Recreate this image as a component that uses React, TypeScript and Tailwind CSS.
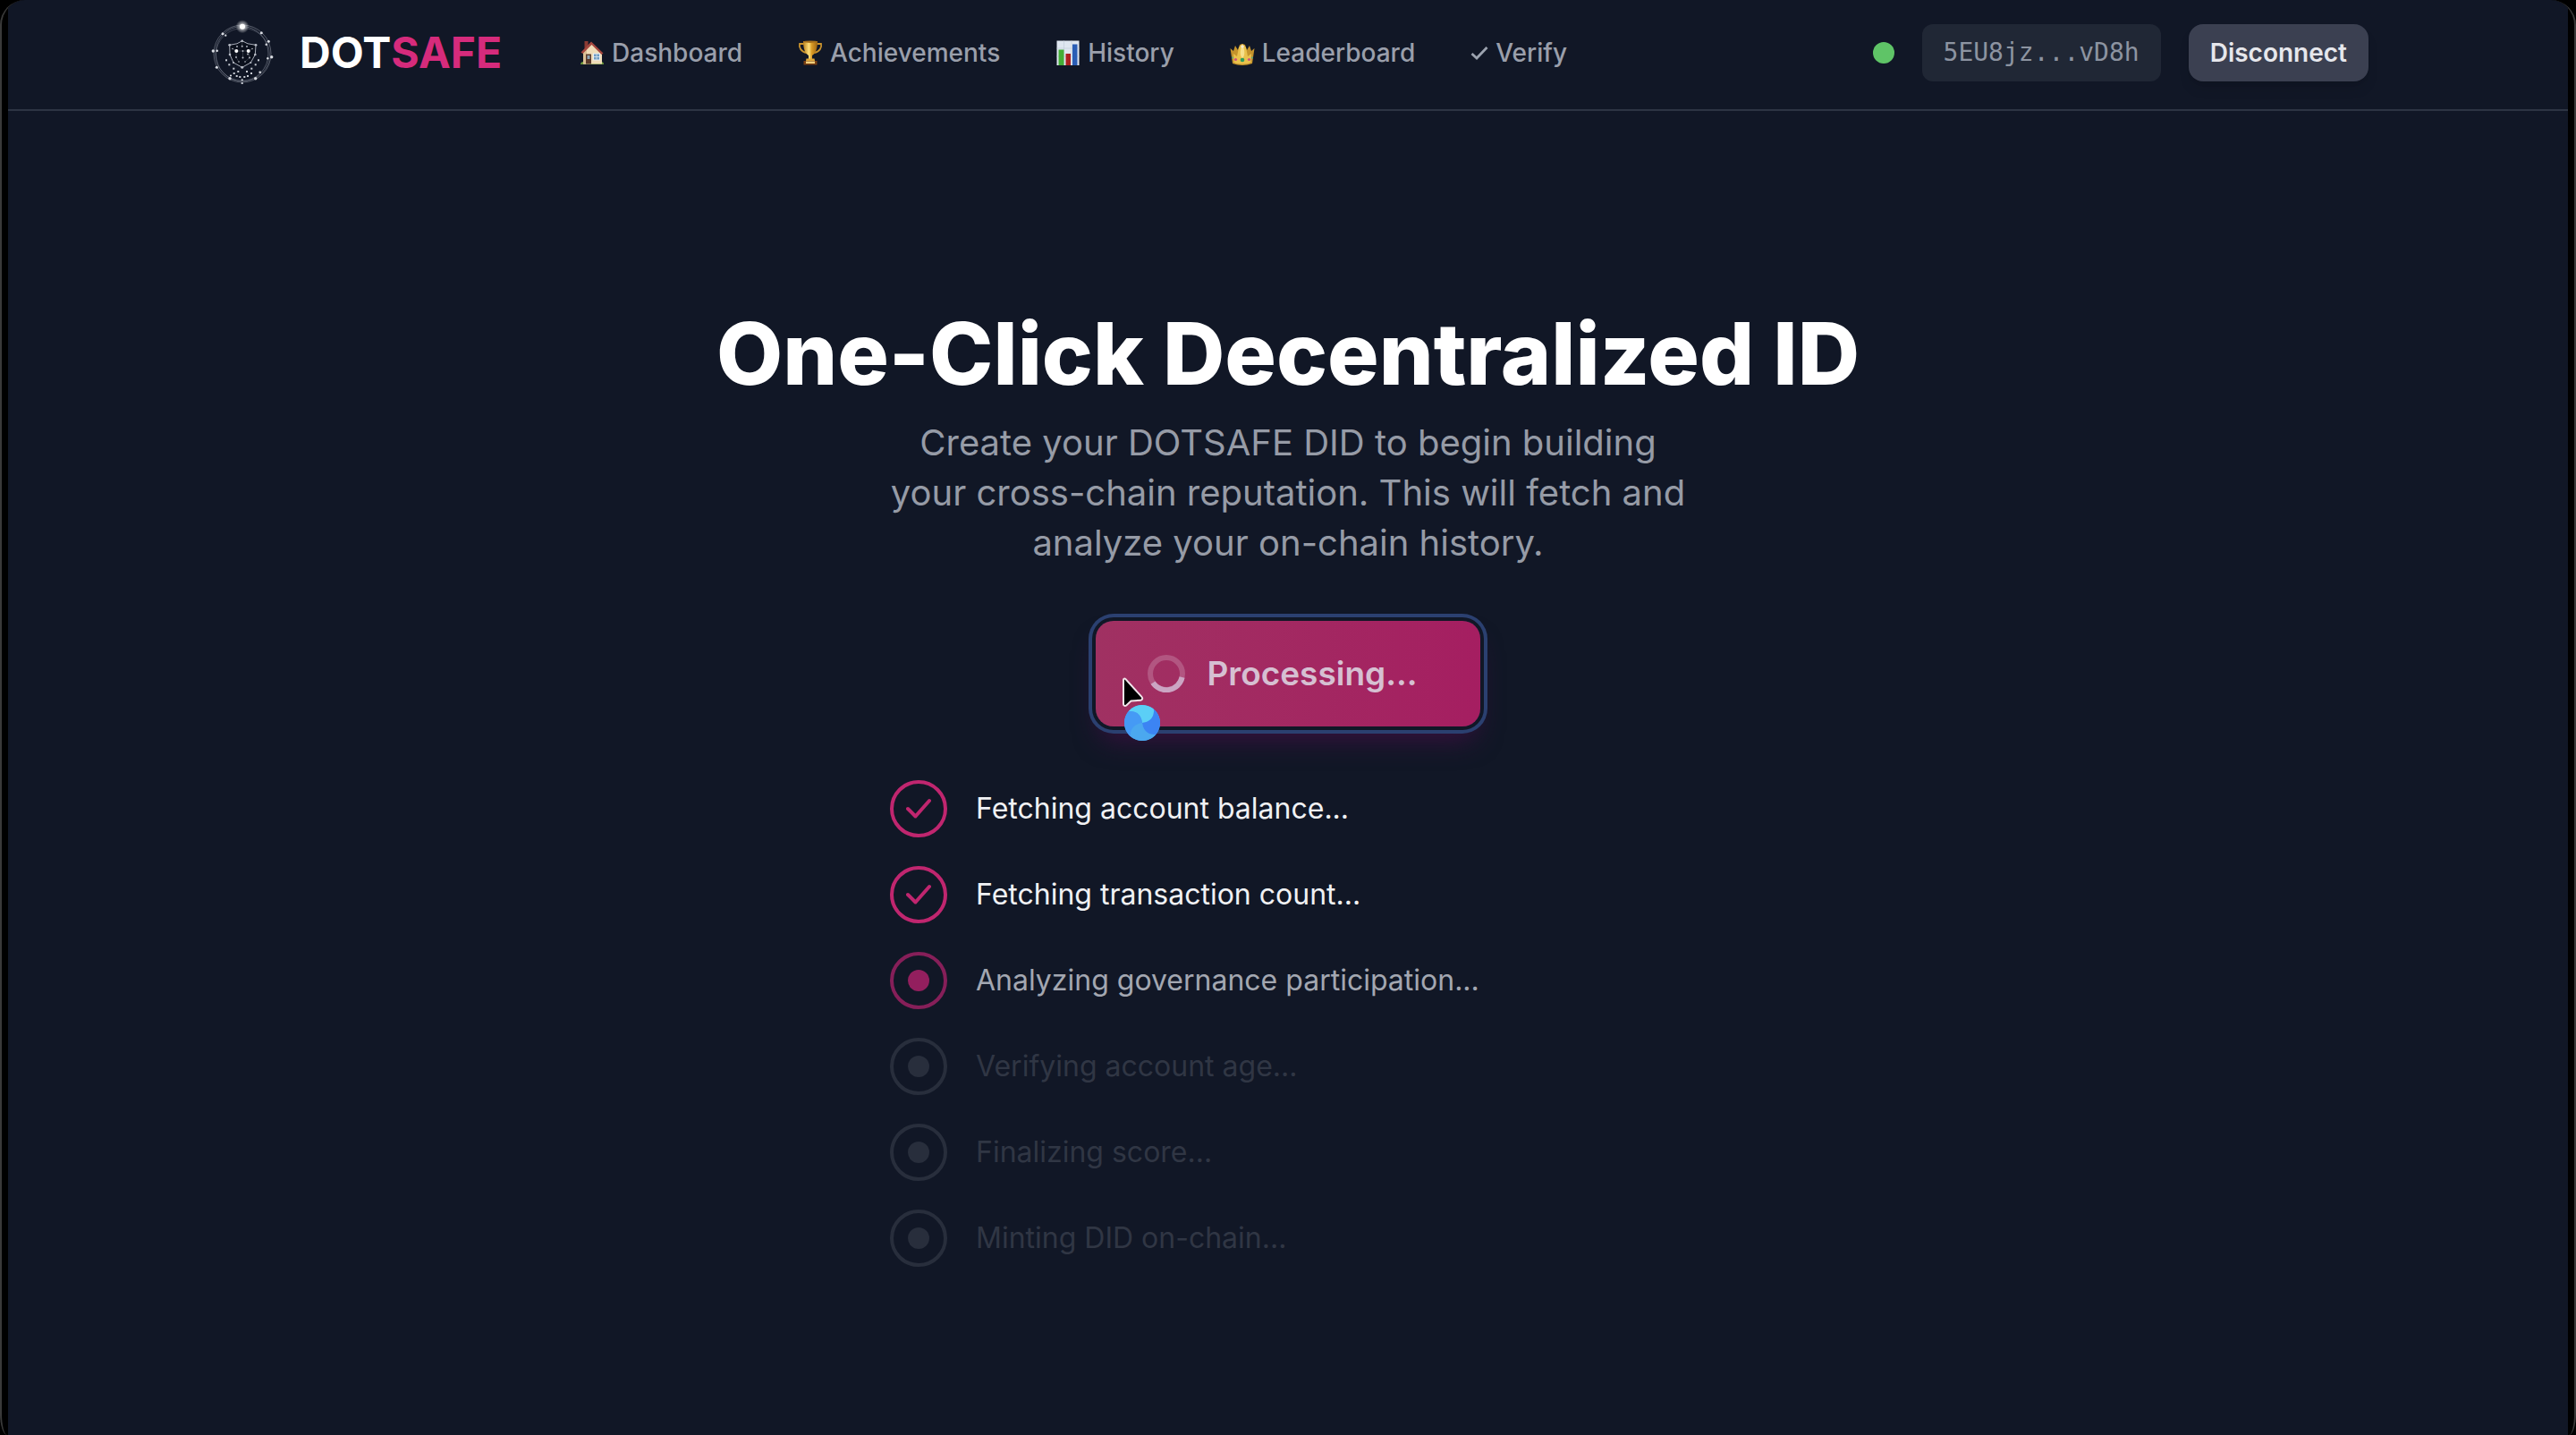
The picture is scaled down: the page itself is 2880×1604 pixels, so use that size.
import React from "react";

const ringNodes: [number, number, number][] = [
  [17, 18.7, 1.5], [20.3, 20.7, 1.1], [60.3, 17.7, 1.5], [68.3, 27.3, 1.5], [65.7, 30.7, 1.2],
  [71.7, 44.7, 1.7], [67.3, 46.3, 1.2], [58.7, 61.7, 1.3], [53.7, 68.7, 1.7], [25, 68.7, 1.7],
  [26, 65.5, 1.1], [10.3, 56.3, 1.5], [6.3, 38, 1.7], [10.7, 37.7, 1.3],
];

const shieldNodes: [number, number, number][] = [
  [38.7, 26.7, 1.3], [24.7, 31.3, 1.4], [54, 31.3, 1.4], [25, 42, 1.3], [53.3, 42, 1.3],
  [29, 51, 1.1], [48.3, 51, 1.1], [38.7, 56.3, 1.5], [33, 33, 0.9], [38.7, 32.8, 1], [44, 33, 0.9],
  [28, 35.5, 0.8], [50, 35.5, 0.8], [39.5, 38, 0.9], [32, 45, 0.9], [39.5, 45.5, 1], [45, 41.5, 0.9],
  [47, 45.5, 0.9], [35, 50, 0.8], [42, 50, 0.8],
];

const particles: [number, number][] = [
  [21, 48.3], [57, 48.3], [24.3, 53.3], [53.7, 53.3], [29.3, 57.7], [49.3, 57.7], [34.3, 61],
  [44, 61], [29.7, 63], [49, 63], [32.7, 66], [45, 66], [36.3, 67], [41.3, 67], [38.7, 70.3], [38.7, 74],
];

function Logo() {
  return (
    <svg viewBox="0 0 80 80" className="size-20 shrink-0" fill="none" aria-hidden="true">
      <defs>
        <radialGradient id="glow">
          <stop offset="0" stopColor="#fff" />
          <stop offset="0.4" stopColor="#fff" stopOpacity="0.6" />
          <stop offset="1" stopColor="#fff" stopOpacity="0" />
        </radialGradient>
      </defs>
      <circle cx="39" cy="41" r="32" stroke="#8f96a3" strokeOpacity="0.55" />
      <ellipse cx="38.5" cy="41" rx="29.5" ry="30.5" stroke="#8f96a3" strokeOpacity="0.5" />
      <ellipse cx="39.5" cy="42" rx="30" ry="29.5" stroke="#8f96a3" strokeOpacity="0.35" />
      <circle cx="39" cy="10.7" r="7.5" fill="url(#glow)" />
      <circle cx="39" cy="10.7" r="3" fill="#fff" />
      {ringNodes.map(([x, y, r]) => (
        <circle key={`${x}-${y}`} cx={x} cy={y} r={r} fill="#d9dce2" />
      ))}
      <path
        d="M38.7 26.7 33 29.8 24.7 31.3 25 42 29 51 38.7 56.3 48.3 51 53.3 42 54 31.3 45 29.8Z"
        fill="#0b101c"
        stroke="#a6abb6"
      />
      <path
        d="M28 35.5 32.3 38 39.5 38 45.7 38 50 35.5M39.5 38v7.5M32.3 38 32 45l3 5M45.7 38 47 45.5 42 50M38.7 26.7v6"
        stroke="#a6abb6"
        strokeOpacity="0.35"
        strokeWidth="0.7"
      />
      {shieldNodes.map(([x, y, r]) => (
        <circle key={`${x}-${y}`} cx={x} cy={y} r={r} fill="#b9bdc7" />
      ))}
      <circle cx="32.3" cy="38" r="2" fill="#fff" />
      <circle cx="45.7" cy="38" r="2" fill="#fff" />
      {particles.map(([x, y]) => (
        <rect key={`${x}-${y}`} x={x - 1} y={y - 1} width="2" height="2" fill="#c9cdd5" />
      ))}
    </svg>
  );
}

function HouseIcon() {
  return (
    <svg viewBox="0 0 28 28" className="size-7" aria-hidden="true">
      <path d="M1 27c0-2 1.500-3 3-3h20c2 0 3 1 3 3z" fill="#6f9a3c" />
      <path d="M4 13 13.500 3 25 14v12.500H4z" fill="#f0dcb8" />
      <path d="M4 13 8 9v17.500H4z" fill="#dcc095" />
      <path d="M5.500 1h4v5l-4 4z" fill="#8c3a33" />
      <path d="M13 1.500 1.500 13.500l2 1.500L13.500 5l11 11 2-1.500z" fill="#a5473f" />
      <rect x="7" y="15.500" width="6" height="11" fill="#5b3a2b" />
      <rect x="8.500" y="17" width="3" height="4" fill="#8fa5b5" />
      <rect x="15" y="14.500" width="8" height="8" fill="#e9eef2" />
      <rect x="16" y="15.500" width="6" height="6" fill="#6e9cc4" />
      <path d="M19 15.500v6M16 18.500h6" stroke="#dbe5ee" strokeWidth="0.800" />
    </svg>
  );
}

function TrophyIcon() {
  return (
    <svg viewBox="0 0 28 28" className="size-7" aria-hidden="true">
      <defs>
        <linearGradient id="cup">
          <stop offset="0" stopColor="#b9801d" />
          <stop offset="0.4" stopColor="#ffe07a" />
          <stop offset="0.6" stopColor="#d99a25" />
          <stop offset="1" stopColor="#9c6414" />
        </linearGradient>
      </defs>
      <path
        d="M7 4H2c-1 4 1.500 9 8 10M21 4h5c1 4-1.500 9-8 10"
        fill="none"
        stroke="#c8922e"
        strokeWidth="1.800"
      />
      <path d="M6 1h16c0 8-2 14-6 16v4h-4v-4C8 15 6 9 6 1z" fill="url(#cup)" />
      <ellipse cx="14" cy="1.700" rx="8" ry="1.200" fill="#a8701b" />
      <path d="M9.500 20.500h9l.5 2.500H9z" fill="#e0a83a" />
      <path d="M6.500 23h15v4.500h-15z" fill="#7a3f12" />
      <rect x="9" y="23.500" width="10" height="2.500" fill="#f0cf7d" />
    </svg>
  );
}

function ChartIcon() {
  return (
    <svg viewBox="0 0 28 28" className="size-7" aria-hidden="true">
      <rect x="1.500" y="0.500" width="25" height="27.500" fill="#dfe6f0" />
      <path d="M1.500 9h25M1.500 18h25M9.500 .5V28M18 .5V28" stroke="#c3cddb" strokeWidth="0.700" />
      <rect x="3.500" y="10.500" width="6" height="17.500" fill="#44ad35" />
      <rect x="11.500" y="15" width="5.500" height="13" fill="#ad2020" />
      <rect x="19" y="4.500" width="5.500" height="23.500" fill="#2a5db5" />
    </svg>
  );
}

function CrownIcon() {
  return (
    <svg viewBox="0 0 28 28" className="size-7" aria-hidden="true">
      <path d="M3 26 .5 9 4 12 6 6l3 5 2-6 3-1 3 1 2 6 3-5 2 6 3.500-3L25 26c-7 2.500-15 2.500-22 0z" fill="#c4932c" />
      <path d="M4.500 25 4 15l4 3 2-10 4-4 4 4 2 10 4-3-.5 10c-6 2-13 2-19 0z" fill="#e9c14c" />
      <path d="M14 6c3 4 3 12 0 14-3-2-3-10 0-14z" fill="#f7e08c" />
      <circle cx="14" cy="7" r="1.800" fill="#f4ead0" />
      <circle cx="14" cy="22" r="2.300" fill="#2f9d5b" />
      <circle cx="6.500" cy="21.500" r="1.600" fill="#d0527c" />
      <circle cx="21.500" cy="21.500" r="1.600" fill="#d0527c" />
      <circle cx="3" cy="19.500" r="1" fill="#4aa58a" />
      <circle cx="25" cy="19.500" r="1" fill="#4aa58a" />
    </svg>
  );
}

function VerifyIcon() {
  return (
    <svg viewBox="0 0 20 28" className="h-7 w-5" fill="none" aria-hidden="true">
      <path d="M1.500 15 7 20 18.500 8" stroke="#9ca3af" strokeWidth="2.800" />
    </svg>
  );
}

const links = [
  { label: "Dashboard", icon: <HouseIcon /> },
  { label: "Achievements", icon: <TrophyIcon /> },
  { label: "History", icon: <ChartIcon /> },
  { label: "Leaderboard", icon: <CrownIcon /> },
  { label: "Verify", icon: <VerifyIcon /> },
];

function Header() {
  return (
    <header className="border-b-2 border-[#2d3443] px-8 pt-[19px] pb-[23px]">
      <div className="mx-auto flex h-20 max-w-[2416px] items-center">
        <a href="#home" className="flex items-center gap-[23px]">
          <Logo />
          <span className="text-5xl leading-none font-bold text-white">
            DOT<span className="text-[#d62b7c]">SAFE</span>
          </span>
        </a>
        <nav className="ml-[87px] flex items-center gap-[62px] text-[28px] leading-10 font-medium text-[#9a9fab]">
          {links.map((link) => (
            <a key={link.label} href={`#${link.label.toLowerCase()}`} className="flex items-center gap-2">
              {link.icon}
              {link.label}
            </a>
          ))}
        </nav>
        <div className="ml-auto flex items-center gap-[31px]">
          <span className="size-6 rounded-full bg-[#5fc467]" />
          <span className="rounded-xl bg-[#202735] px-6 py-3 font-['DejaVu_Sans_Mono',monospace] text-[28px] leading-10 text-[#8d94a1]">
            5EU8jz...vD8h
          </span>
          <button
            type="button"
            className="rounded-2xl bg-[#3b4051] px-6 py-3 text-[28px] leading-10 font-semibold text-[#e6e7ec] shadow-lg"
          >
            Disconnect
          </button>
        </div>
      </div>
    </header>
  );
}

const blades = [
  { angle: 0, color: "#5bcff6" },
  { angle: 90, color: "#3c84f3" },
  { angle: 180, color: "#4ba8ef" },
  { angle: 270, color: "#459af5" },
];

function Pointer() {
  return (
    <svg
      viewBox="0 0 76 80"
      className="pointer-events-none absolute top-[60px] left-7 h-20 w-[76px]"
      aria-hidden="true"
    >
      <path
        d="M3 6v27c0 2 2 2.500 3.500 1.200l5-4.700 10.500-.8c2.500-.2 2.800-2.200 1.200-4L5.500 5.200C4.300 4 3 4.500 3 6z"
        fill="#000"
        stroke="#f1e4ea"
        strokeWidth="2"
        strokeLinejoin="round"
      />
      <g transform="translate(24 54)">
        <circle r="20" fill="#48a2f3" />
        {blades.map((blade) => (
          <path
            key={blade.angle}
            d="M0 0C-1 -9 -7 -14 -15.3 -12.9A20 20 0 0 1 12.9 -15.3C14 -7 9 -1 0 0Z"
            fill={blade.color}
            transform={`rotate(${blade.angle})`}
          />
        ))}
      </g>
    </svg>
  );
}

function Spinner() {
  return (
    <svg viewBox="0 0 42 42" className="size-[42px]" fill="none" aria-hidden="true">
      <circle cx="21" cy="21" r="18" stroke="#d9b3cb" strokeOpacity="0.3" strokeWidth="6" />
      <path d="M38.600 25A18 18 0 0 1 6 31.200" stroke="#cba5c3" strokeWidth="6" />
    </svg>
  );
}

type State = "done" | "active" | "waiting";

const steps: { label: string; state: State }[] = [
  { label: "Fetching account balance...", state: "done" },
  { label: "Fetching transaction count...", state: "done" },
  { label: "Analyzing governance participation...", state: "active" },
  { label: "Verifying account age...", state: "waiting" },
  { label: "Finalizing score...", state: "waiting" },
  { label: "Minting DID on-chain...", state: "waiting" },
];

const ringStyle: Record<State, string> = {
  done: "border-[#c0266f]",
  active: "border-[#861f59]",
  waiting: "border-[#282e3c]",
};

const textStyle: Record<State, string> = {
  done: "text-[#f0f1f4]",
  active: "text-[#a3a7b1]",
  waiting: "text-[#303644]",
};

function StepMark({ state }: { state: State }) {
  if (state === "done") {
    return (
      <svg viewBox="0 0 28 24" className="h-6 w-7" fill="none" aria-hidden="true">
        <path d="M2 12 10.500 20.500 26 3" stroke="#c0266f" strokeWidth="4" strokeLinecap="round" strokeLinejoin="round" />
      </svg>
    );
  }
  return (
    <span className={state === "active" ? "size-6 rounded-full bg-[#931f5e]" : "size-6 rounded-full bg-[#282e3c]"} />
  );
}

export default function App() {
  return (
    <div className="bg-black">
      <div className="min-h-screen overflow-hidden rounded-t-[28px] rounded-br-[8px_24px] rounded-bl-[8px_24px] border-x-2 border-[#3a3a3a] px-[7px] font-['Inter',sans-serif]">
        <div className="min-h-screen bg-[#111726]">
          <Header />
          <main className="flex flex-col items-center px-8 pt-[223px] pb-32">
            <h1 className="text-center text-8xl leading-none font-extrabold text-white">
              One-Click Decentralized ID
            </h1>
            <p className="mt-6 max-w-[896px] text-center text-[40px] leading-14 text-[#969ba6]">
              Create your DOTSAFE DID to begin building your cross-chain reputation. This will fetch and analyze your
              on-chain history.
            </p>
            <div className="relative mt-[59px]">
              <button
                type="button"
                className="flex h-[118px] items-center gap-6 rounded-[20px] bg-linear-to-r from-[#a03162] to-[#a51e61] pr-[70px] pl-[58px] text-[37px] font-semibold text-[#d6c0d2] shadow-[0_20px_30px_-6px_#3a1040] ring-4 ring-[#2b4070] ring-offset-4 ring-offset-[#111726]"
              >
                <Spinner />
                Processing...
              </button>
              <Pointer />
            </div>
            <ul className="mt-[60px] flex w-full max-w-[890px] flex-col gap-8">
              {steps.map((step) => (
                <li key={step.label} className="flex items-center gap-8">
                  <span
                    className={`flex size-16 shrink-0 items-center justify-center rounded-full border-4 ${ringStyle[step.state]}`}
                  >
                    <StepMark state={step.state} />
                  </span>
                  <span className={`text-[32px] leading-12 ${textStyle[step.state]}`}>{step.label}</span>
                </li>
              ))}
            </ul>
          </main>
        </div>
      </div>
    </div>
  );
}
